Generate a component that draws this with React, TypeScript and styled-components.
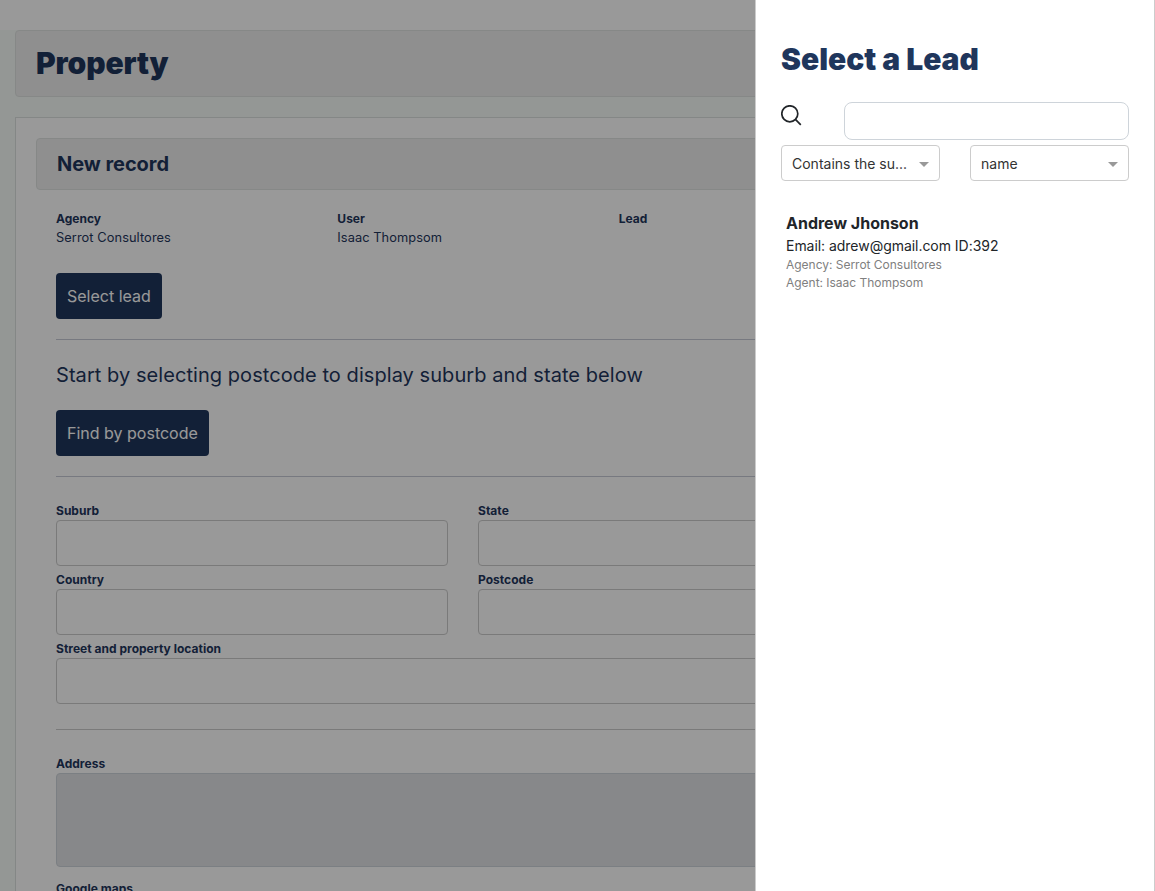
import React from "react";
import styled, { createGlobalStyle, css } from "styled-components";

const Global = createGlobalStyle`
  *, *::before, *::after { box-sizing: border-box; }
  html, body, #root { height: 100%; }
  body {
    margin: 0;
    overflow: hidden;
    background: #f7fcf9;
    color: #1f365c;
    font-family: Inter, "Liberation Sans", sans-serif;
    font-size: 13px;
    line-height: 1.5;
  }
  h1, h2, p { margin: 0; }
`;

const Page = styled.div`
  display: flex;
  flex-direction: column;
  height: 891px;
  overflow: hidden;
`;

const TopBar = styled.header`
  flex: none;
  height: 30px;
  background: #fff;
`;

const Main = styled.main`
  flex: none;
  display: flex;
  flex-direction: column;
  gap: 20px;
  padding: 0 15px;
`;

const headerBox = css`
  display: flex;
  align-items: center;
  background: #efefef;
  border: 1px solid #e0e3e2;
  border-radius: 4px;
`;

const PageHeader = styled.div`
  ${headerBox}
  height: 67px;
  padding: 0 20px 2px;
`;

const Heading = styled.h1<{ $tight?: boolean }>`
  font-size: 30px;
  font-weight: 900;
  line-height: 36px;
  letter-spacing: ${(p) => (p.$tight ? "-0.12px" : "normal")};
  color: #1f365c;
`;

const Card = styled.section`
  background: #fff;
  border: 1px solid #dde1e0;
  padding: 20px;
  height: 900px;
`;

const CardHeader = styled.div`
  ${headerBox}
  height: 52px;
  padding: 0 20px;
`;

const CardTitle = styled.h2`
  font-size: 20px;
  font-weight: 700;
  line-height: 24px;
  letter-spacing: -0.05px;
`;

const Form = styled.div`
  width: 854px;
  padding: 19px 20px 0;
`;

const Columns = styled.div<{ $count: number }>`
  display: grid;
  grid-template-columns: repeat(${(p) => p.$count}, 1fr);
  column-gap: 30px;
`;

const Info = styled.div`
  display: flex;
  flex-direction: column;
  height: 64px;
`;

const Label = styled.label`
  display: block;
  font-size: 12px;
  font-weight: 700;
  line-height: 19px;
  letter-spacing: 0.02px;
`;

const Value = styled.span`
  font-size: 12.8px;
  line-height: 20px;
  letter-spacing: 0.08px;
`;

const Button = styled.button`
  display: block;
  height: 46px;
  padding: 0 11px;
  border: 0;
  border-radius: 4px;
  background: #1f365c;
  color: #fff;
  font: 400 16px/24px Inter, sans-serif;
`;

const Divider = styled.hr<{ $top: number; $bottom: number; $color?: string }>`
  height: 1px;
  border: 0;
  margin: ${(p) => p.$top}px 0 ${(p) => p.$bottom}px;
  background: ${(p) => p.$color ?? "#c7cad5"};
`;

const Prompt = styled.p`
  font-size: 20px;
  line-height: 31px;
  margin-bottom: 19px;
  letter-spacing: 0.06px;
`;

const Field = styled.div<{ $tall?: boolean }>`
  padding-bottom: ${(p) => (p.$tall ? 12 : 4)}px;
`;

const Input = styled.input<{ $tall?: boolean }>`
  display: block;
  width: 100%;
  height: ${(p) => (p.$tall ? 94 : 46)}px;
  border: 1px solid #ced4da;
  border-color: ${(p) => (p.$tall ? "#ced4da" : "#cccccc")};
  border-radius: 4px;
  background: ${(p) => (p.$tall ? "#e1e3e6" : "#fff")};
`;

const Overlay = styled.div`
  position: fixed;
  inset: 0;
  display: flex;
  justify-content: flex-end;
  background: rgba(0, 0, 0, 0.4);
`;

const Panel = styled.aside`
  width: 400px;
  height: 100%;
  padding: 41px 25px 0;
  background: #fff;
  border: solid #ccc;
  border-width: 0 1px;
  color: #212529;
`;

const SearchRow = styled.div`
  display: flex;
  justify-content: space-between;
  align-items: flex-start;
  margin-top: 25px;
`;

const SearchIcon = styled.svg`
  display: block;
  margin-top: 3px;
`;

const SearchInput = styled.input`
  width: 285px;
  height: 38px;
  border: 1px solid #ced4da;
  border-radius: 8px;
  background: #fff;
`;

const Filters = styled.div`
  display: flex;
  justify-content: space-between;
  margin-top: 5px;
`;

const Select = styled.div`
  display: flex;
  align-items: center;
  justify-content: space-between;
  width: 159px;
  height: 36px;
  padding: 0 10px;
  border: 1px solid #ccc;
  border-radius: 4px;
  color: #333;
  font-size: 14px;

  &::after {
    content: "";
    margin-top: 2px;
    border: solid transparent;
    border-width: 5px 5px 0;
    border-top-color: #999;
  }
`;

const Lead = styled.article`
  display: flex;
  flex-direction: column;
  padding: 30px 5px 0;
`;

const LeadName = styled.strong`
  font-size: 16px;
  font-weight: 700;
  line-height: 24px;
`;

const LeadEmail = styled.span`
  font-size: 14px;
  line-height: 21px;
  letter-spacing: -0.04px;
`;

const LeadMeta = styled.span`
  font-size: 12px;
  line-height: 18px;
  letter-spacing: -0.02px;
  color: #808080;
`;

const details = [
  ["Agency", "Serrot Consultores"],
  ["User", "Isaac Thompsom"],
  ["Lead", ""],
];

const TextField = ({ label, tall }: { label: string; tall?: boolean }) => (
  <Field $tall={tall}>
    <Label>{label}</Label>
    <Input aria-label={label} $tall={tall} disabled={tall} />
  </Field>
);

export default function App() {
  return (
    <>
      <Global />
      <Page>
        <TopBar />
        <Main>
          <PageHeader>
            <Heading $tight>Property</Heading>
          </PageHeader>
          <Card>
            <CardHeader>
              <CardTitle>New record</CardTitle>
            </CardHeader>
            <Form>
              <Columns $count={3}>
                {details.map(([label, value]) => (
                  <Info key={label}>
                    <Label>{label}</Label>
                    <Value>{value}</Value>
                  </Info>
                ))}
              </Columns>
              <Button>Select lead</Button>
              <Divider $top={20} $bottom={20} />
              <Prompt>Start by selecting postcode to display suburb and state below</Prompt>
              <Button>Find by postcode</Button>
              <Divider $top={20} $bottom={24} />
              <Columns $count={2}>
                <TextField label="Suburb" />
                <TextField label="State" />
                <TextField label="Country" />
                <TextField label="Postcode" />
              </Columns>
              <TextField label="Street and property location" />
              <Divider $top={21} $bottom={24} $color="#cbcbcb" />
              <TextField label="Address" tall />
              <TextField label="Google maps" />
            </Form>
          </Card>
        </Main>
      </Page>
      <Overlay>
        <Panel>
          <Heading>Select a Lead</Heading>
          <SearchRow>
            <SearchIcon width="21" height="21" viewBox="0 0 21 21" fill="none" stroke="#212529" strokeWidth="1.7">
              <circle cx="8.8" cy="8.8" r="8" />
              <path d="M14.4 14.4 L19.8 19.8" />
            </SearchIcon>
            <SearchInput aria-label="Search" />
          </SearchRow>
          <Filters>
            <Select>Contains the su...</Select>
            <Select>name</Select>
          </Filters>
          <Lead>
            <LeadName>Andrew Jhonson</LeadName>
            <LeadEmail>Email: adrew@gmail.com ID:392</LeadEmail>
            <LeadMeta>Agency: Serrot Consultores</LeadMeta>
            <LeadMeta>Agent: Isaac Thompsom</LeadMeta>
          </Lead>
        </Panel>
      </Overlay>
    </>
  );
}
